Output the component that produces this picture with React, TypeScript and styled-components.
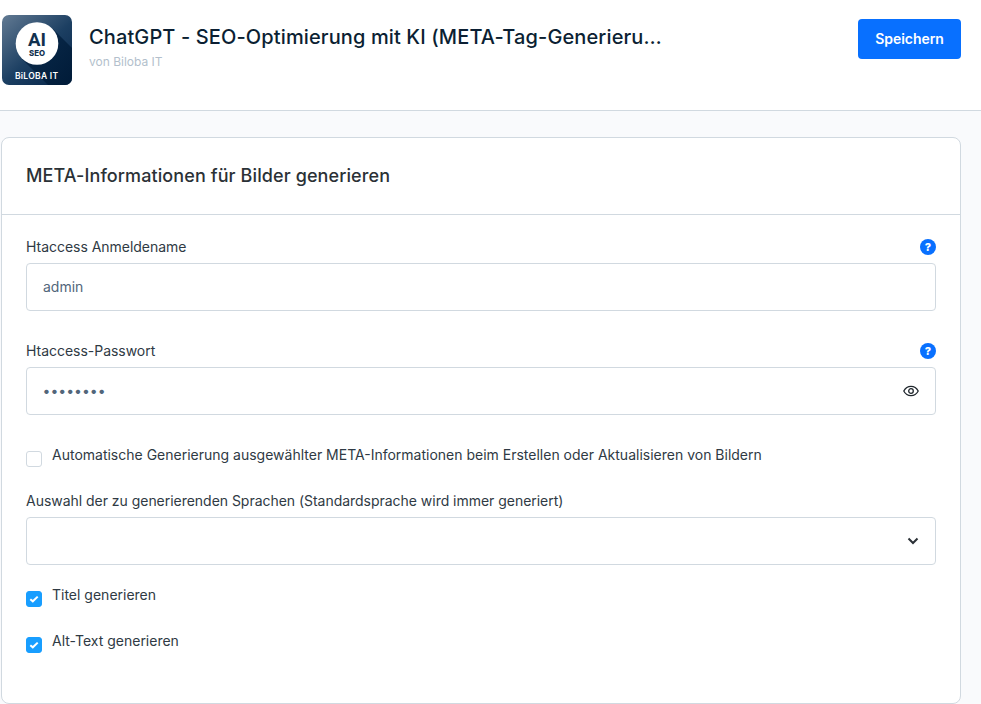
import React from "react";
import styled, { createGlobalStyle } from "styled-components";

const Global = createGlobalStyle`
  html, body { margin: 0; padding: 0; background: #f9fafc; }
  body { font-family: Inter, "Liberation Sans", sans-serif; overflow: hidden; height: 704px; }
  * { box-sizing: border-box; }
`;

const Page = styled.div`
  width: 981px;
  height: 704px;
  overflow: hidden;
`;

const Header = styled.header`
  height: 111px;
  background: #fff;
  border-bottom: 1px solid #d1d9e0;
  display: flex;
  align-items: flex-start;
  padding: 15px 20px 0 2px;
`;

const Logo = styled.svg`
  width: 70px;
  height: 70px;
  flex: none;
  display: block;
`;

const TitleBlock = styled.div`
  margin-left: 17px;
  width: 574px;
  padding-top: 9px;
`;

const Title = styled.h1`
  margin: 0;
  font-size: 20px;
  line-height: 26px;
  font-weight: 500;
  letter-spacing: 0.12px;
  color: #0b1f33;
  white-space: nowrap;
  overflow: hidden;
  text-overflow: ellipsis;
`;

const Vendor = styled.div`
  margin-top: 4px;
  font-size: 12px;
  line-height: 16px;
  color: #b3bfcc;
`;

const SaveButton = styled.button`
  margin-left: auto;
  margin-top: 4px;
  width: 103px;
  height: 40px;
  border: 0;
  border-radius: 4px;
  background: #0870ff;
  color: #fff;
  padding: 0 0 2px;
  font: 600 14px Inter, sans-serif;
  letter-spacing: -0.05px;
`;

const Main = styled.main`
  padding: 26px 20px 0 1px;
`;

const Card = styled.section`
  height: 567px;
  background: #fff;
  border: 1px solid #d1d9e0;
  border-radius: 8px;
`;

const CardHeader = styled.div`
  height: 77px;
  border-bottom: 1px solid #d1d9e0;
  display: flex;
  align-items: center;
  padding-left: 24px;
`;

const CardTitle = styled.h2`
  margin: 0;
  font-size: 18px;
  line-height: 24px;
  font-weight: 500;
  letter-spacing: 0.1px;
  color: #2b3136;
`;

const CardBody = styled.div`
  padding: 24px 24px 0;
  display: flex;
  flex-direction: column;
`;

const Field = styled.div<{ $gap: number }>`
  margin-bottom: ${(p) => p.$gap}px;
`;

const LabelRow = styled.div`
  height: 16px;
  margin-bottom: 8px;
  display: flex;
  justify-content: space-between;
  align-items: center;
`;

const Label = styled.label`
  font-size: 14px;
  line-height: 16px;
  letter-spacing: -0.03px;
  color: #2f3a44;
`;

const Help = styled.span`
  width: 16px;
  height: 16px;
  border-radius: 50%;
  background: #0870ff;
  color: #fff;
  font-size: 11px;
  font-weight: 800;
  line-height: 16px;
  text-align: center;
`;

const InputBox = styled.div`
  height: 48px;
  border: 1px solid #d1d9e0;
  border-radius: 4px;
  display: flex;
  align-items: center;
  justify-content: space-between;
  padding: 0 16px;
  background: #fff;
`;

const Value = styled.span<{ $dots?: boolean }>`
  font-size: 14px;
  line-height: 16px;
  color: #52667a;
  margin-top: -1px;
  margin-left: ${(p) => (p.$dots ? "-0.5px" : "0")};
`;

const CheckRow = styled.div<{ $gap: number }>`
  display: flex;
  align-items: flex-start;
  gap: 10px;
  margin-bottom: ${(p) => p.$gap}px;
`;

const Box = styled.span<{ $on?: boolean }>`
  width: 16px;
  height: 16px;
  margin-top: 4px;
  flex: none;
  border-radius: 3px;
  border: 1px solid ${(p) => (p.$on ? "#189eff" : "#d1d9e0")};
  background: ${(p) => (p.$on ? "#189eff" : "#fff")};
  display: flex;
  align-items: center;
  justify-content: center;
`;

const CheckLabel = styled.span`
  font-size: 14px;
  line-height: 16px;
  color: #2f3a44;
`;

const IconEye = () => (
  <svg width="16" height="12" viewBox="0 0 16 12" fill="none" stroke="#1f262c" strokeWidth="1.3">
    <path d="M.8 6C2.4 2.9 5 1.3 8 1.3S13.6 2.9 15.2 6C13.6 9.1 11 10.7 8 10.7S2.4 9.1.8 6Z" />
    <circle cx="8" cy="6" r="2.3" />
  </svg>
);

const IconChevron = () => (
  <svg width="12" height="8" viewBox="0 0 12 8" fill="none" stroke="#2b3136" strokeWidth="2">
    <path d="M1.5 1.5 6 6l4.5-4.5" />
  </svg>
);

const IconCheck = () => (
  <svg width="10" height="8" viewBox="0 0 10 8" fill="none" stroke="#fff" strokeWidth="2">
    <path d="M1.3 4.2 3.8 6.3 8.7 1.6" />
  </svg>
);

const LogoArt = () => (
  <Logo viewBox="0 0 70 70">
    <defs>
      <linearGradient id="lg" x1="0" y1="0" x2="0.9" y2="1">
        <stop offset="0" stopColor="#627a93" />
        <stop offset="0.55" stopColor="#1c3f62" />
        <stop offset="1" stopColor="#07264a" />
      </linearGradient>
      <linearGradient id="ls" x1="0" y1="0" x2="1" y2="1">
        <stop offset="0" stopColor="#0c2d4f" />
        <stop offset="1" stopColor="#001b38" />
      </linearGradient>
      <clipPath id="lc">
        <rect width="70" height="70" rx="7" />
      </clipPath>
    </defs>
    <rect width="70" height="70" rx="7" fill="url(#lg)" />
    <path d="M20 44 50 13 70 33V70H46Z" fill="url(#ls)" clipPath="url(#lc)" />
    <circle cx="35" cy="28.5" r="21.3" fill="#fff" />
    <text x="35" y="30.5" textAnchor="middle" fontFamily="Roboto, sans-serif" fontWeight="700" fontSize="19" fill="#12314f" textLength="18" lengthAdjust="spacingAndGlyphs">AI</text>
    <text x="35" y="41" textAnchor="middle" fontFamily="Inter, sans-serif" fontWeight="800" fontSize="8" fill="#12314f" textLength="16" lengthAdjust="spacingAndGlyphs">SEO</text>
    <text x="34.5" y="64" textAnchor="middle" fontFamily="Inter, sans-serif" fontWeight="600" fontSize="8.5" fill="#fff" textLength="43">BiLOBA IT</text>
  </Logo>
);

export default function App() {
  return (
    <Page>
      <Global />
      <Header>
        <LogoArt />
        <TitleBlock>
          <Title>ChatGPT - SEO-Optimierung mit KI (META-Tag-Generierung)</Title>
          <Vendor>von Biloba IT</Vendor>
        </TitleBlock>
        <SaveButton>Speichern</SaveButton>
      </Header>
      <Main>
        <Card>
          <CardHeader>
            <CardTitle>META-Informationen für Bilder generieren</CardTitle>
          </CardHeader>
          <CardBody>
            <Field $gap={32}>
              <LabelRow>
                <Label>Htaccess Anmeldename</Label>
                <Help>?</Help>
              </LabelRow>
              <InputBox>
                <Value>admin</Value>
              </InputBox>
            </Field>
            <Field $gap={32}>
              <LabelRow>
                <Label>Htaccess-Passwort</Label>
                <Help>?</Help>
              </LabelRow>
              <InputBox>
                <Value $dots>••••••••</Value>
                <IconEye />
              </InputBox>
            </Field>
            <CheckRow $gap={26}>
              <Box />
              <CheckLabel>
                Automatische Generierung ausgewählter META-Informationen beim Erstellen oder Aktualisieren von Bildern
              </CheckLabel>
            </CheckRow>
            <Field $gap={22}>
              <LabelRow>
                <Label>Auswahl der zu generierenden Sprachen (Standardsprache wird immer generiert)</Label>
              </LabelRow>
              <InputBox>
                <span />
                <IconChevron />
              </InputBox>
            </Field>
            <CheckRow $gap={26}>
              <Box $on>
                <IconCheck />
              </Box>
              <CheckLabel>Titel generieren</CheckLabel>
            </CheckRow>
            <CheckRow $gap={0}>
              <Box $on>
                <IconCheck />
              </Box>
              <CheckLabel>Alt-Text generieren</CheckLabel>
            </CheckRow>
          </CardBody>
        </Card>
      </Main>
    </Page>
  );
}
